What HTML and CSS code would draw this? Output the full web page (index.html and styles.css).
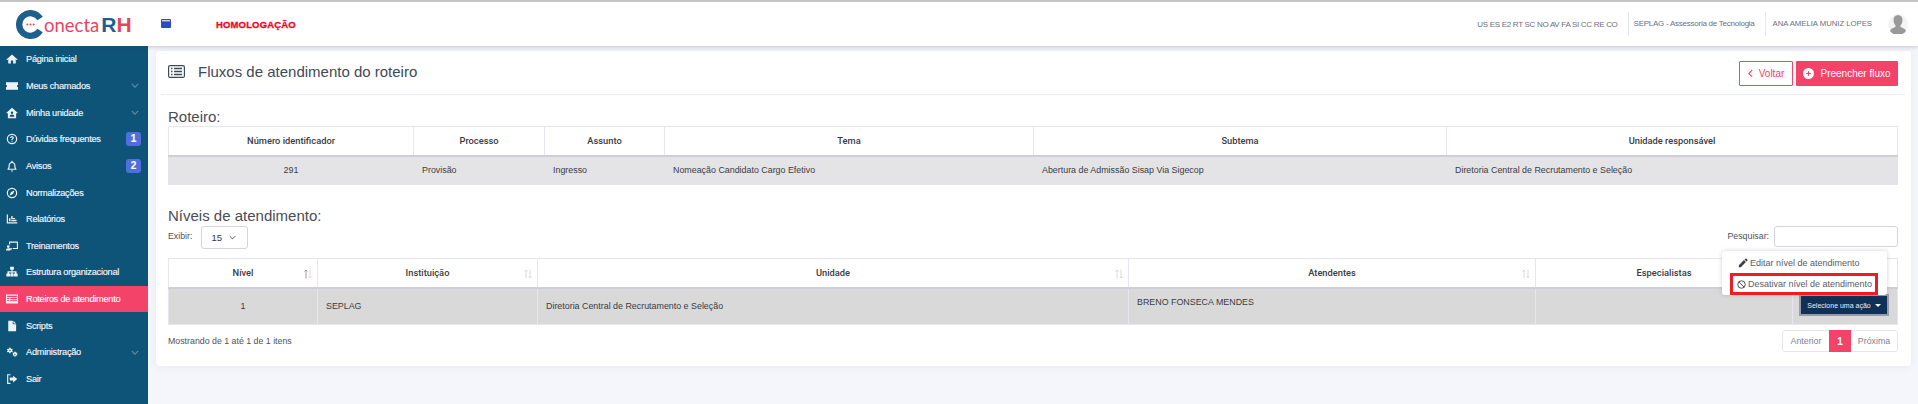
FILE: index.html
```html
<!DOCTYPE html>
<html lang="pt-BR">

<head>
	<meta charset="UTF-8">
	<title>Fluxos de atendimento do roteiro</title>
	<link rel="stylesheet" href="styles.css">
</head>

<body>
	<header class="top-bar">
		<div class="logo">
			<svg class="logo-mark" viewBox="0 0 32 32" xmlns="http://www.w3.org/2000/svg">
				<path d="M26.600 9.400A12.500 12.500 0 1 0 26.600 22.600" fill="none" stroke="#1f5f8e" stroke-width="7" />
				<circle cx="12.500" cy="16" r="1.100" fill="#e8465f" />
				<circle cx="16" cy="16" r="1.100" fill="#e8465f" />
				<circle cx="19.500" cy="16" r="1.100" fill="#e8465f" />
			</svg>
			<span class="logo-text">onecta</span>
			<span class="logo-rh"><b>R</b><i>H</i></span>
		</div>
		<svg class="window-icon" viewBox="0 0 10 9" xmlns="http://www.w3.org/2000/svg">
			<rect width="10" height="9" rx="1" fill="#2b4cc0" />
			<rect x="1" y="1" width="8" height="1.400" fill="#c9d2f2" />
		</svg>
		<span class="env">HOMOLOGAÇÃO</span>
		<div class="top-right">
			<span class="modules">US ES E2 RT SC NO AV FA SI CC RE CO</span>
			<span class="unit">SEPLAG - Assessoria de Tecnologia</span>
			<span class="user">ANA AMELIA MUNIZ LOPES</span>
			<svg class="avatar" viewBox="0 0 20 20" xmlns="http://www.w3.org/2000/svg">
				<circle cx="10" cy="10" r="10" fill="#f4f4f4" />
				<path d="M10 1c3 0 4.500 2.200 4.500 5 0 2.500-1 4.500-2 5.500v1.500c2 1 5 1.500 5.500 4A10 10 0 0 1 2 17c.5-2.500 3.500-3 5.500-4v-1.500c-1-1-2-3-2-5.500 0-2.800 1.500-5 4.500-5z" fill="#999" />
			</svg>
		</div>
	</header>

	<div class="main">
		<nav class="sidebar">
			<a class="nav-item">
				<svg class="nav-icon" viewBox="0 0 16 16"><path d="M8 2 0.500 8.500 1.500 9.500 3 8.300V14h3.500v-4h3v4H13V8.300l1.500 1.200 1-1z" /></svg>
				Página inicial
			</a>
			<a class="nav-item">
				<svg class="nav-icon" viewBox="0 0 16 16"><path d="M0 3h16v3.500a1.500 1.500 0 0 0 0 3V13H0V9.500a1.500 1.500 0 0 0 0-3z" /></svg>
				Meus chamados
				<svg class="chevron" viewBox="0 0 10 6"><path d="M1 1l4 4 4-4" /></svg>
			</a>
			<a class="nav-item">
				<svg class="nav-icon" viewBox="0 0 16 16"><path d="M8 1 0.500 7.500 1.500 8.500 2.500 7.700V15h11V7.700l1 .8 1-1zM8 6a1.600 1.600 0 1 1 0 3.200A1.600 1.600 0 0 1 8 6zm-3 7c0-2 1-3 3-3s3 1 3 3z" fill-rule="evenodd" /></svg>
				Minha unidade
				<svg class="chevron" viewBox="0 0 10 6"><path d="M1 1l4 4 4-4" /></svg>
			</a>
			<a class="nav-item">
				<svg class="nav-icon" viewBox="0 0 16 16"><path d="M8 1a7 7 0 1 0 0 14A7 7 0 0 0 8 1zm0 1.600a5.400 5.400 0 1 1 0 10.800A5.400 5.400 0 0 1 8 2.600zM8 4.300C6.500 4.300 5.500 5.200 5.400 6.500h1.500c.1-.5.500-.9 1.100-.9s1 .3 1 .8c0 1-2 1.100-2 3h1.500c0-1.300 2-1.400 2-3.100 0-1.200-1-2-2.500-2zM7.200 10.300h1.600v1.500H7.200z" fill-rule="evenodd" /></svg>
				Dúvidas frequentes
				<span class="badge">1</span>
			</a>
			<a class="nav-item">
				<svg class="nav-icon" viewBox="0 0 16 16"><path d="M8 1a1 1 0 0 0-1 1v.6C4.800 3 3.500 4.800 3.500 7c0 3-1 4-1.500 5v1h12v-1c-.5-1-1.500-2-1.500-5 0-2.200-1.300-4-3.500-4.400V2a1 1 0 0 0-1-1zm0 3c2 0 3 1.400 3 3.200 0 2 .4 3.300.9 4.300H4.100c.5-1 .9-2.300.9-4.300C5 5.400 6 4 8 4zM6.500 14a1.500 1.500 0 0 0 3 0z" fill-rule="evenodd" /></svg>
				Avisos
				<span class="badge">2</span>
			</a>
			<a class="nav-item">
				<svg class="nav-icon" viewBox="0 0 16 16"><path d="M8 1a7 7 0 1 0 0 14A7 7 0 0 0 8 1zm0 1.600a5.400 5.400 0 1 1 0 10.800A5.400 5.400 0 0 1 8 2.600zM11.500 4.500 6.700 6.700 4.500 11.500 9.300 9.300z" fill-rule="evenodd" /></svg>
				Normalizações
			</a>
			<a class="nav-item">
				<svg class="nav-icon" viewBox="0 0 16 16"><path d="M1 2h1.600v10.400H15V14H1zM4 7h2v4H4zM7 4h1.800v2.600H12V8H7zM7 9h7v2H7z" /></svg>
				Relatórios
			</a>
			<a class="nav-item">
				<svg class="nav-icon" viewBox="0 0 16 16"><path d="M4 2h12v10H9v-1.500h5.500v-7H5.500V6H4zM3 7a1.800 1.800 0 1 1 0 3.600A1.800 1.800 0 0 1 3 7zM0 14c0-2 1-3 3-3h5v1.500H6V14z" /></svg>
				Treinamentos
			</a>
			<a class="nav-item">
				<svg class="nav-icon" viewBox="0 0 16 16"><path d="M5.500 1h5v4H8.700v2H14v3h1.500v4h-5v-4H12V8.500H8.700V10h1.300v4H6v-4h1.300V8.500H4V10h1.500v4h-5v-4H2V7h5.300V5H5.500z" /></svg>
				Estrutura organizacional
			</a>
			<a class="nav-item active">
				<svg class="nav-icon" viewBox="0 0 16 16"><path d="M0 2h16v12H0zm1.500 1.500v2h13v-2zm0 3.200v1.600h3V6.700zm4.200 0v1.600h8.800V6.700zm-4.200 2.800v1.600h3V9.500zm4.200 0v1.600h8.800V9.500z" fill-rule="evenodd" /></svg>
				Roteiros de atendimento
			</a>
			<a class="nav-item">
				<svg class="nav-icon" viewBox="0 0 16 16"><path d="M3 1h6v4.500h4.500V15H3zM10 1l3.500 3.500H10z" /></svg>
				Scripts
			</a>
			<a class="nav-item">
				<svg class="nav-icon" viewBox="0 0 16 16"><path d="M5 2l1 .2.300 1.200.9.500 1.200-.4.700 1-.8.900v1l.8.900-.7 1-1.200-.4-.9.500L6 9.600H4.400l-.3-1.200-.9-.5-1.200.4-.7-1 .8-.9v-1l-.8-.9.700-1 1.200.4.900-.5.300-1.200zm.2 3a1 1 0 1 0 0 2 1 1 0 0 0 0-2zM12 7.500l.9.200.2 1 .7.400 1-.3.500.8-.7.800v.8l.7.800-.5.800-1-.3-.7.400-.2 1h-1.800l-.2-1-.7-.4-1 .3-.5-.8.700-.8v-.8l-.7-.8.500-.8 1 .3.700-.4.200-1zm-.1 2.700a.9.900 0 1 0 0 1.800.9.900 0 0 0 0-1.800z" fill-rule="evenodd" /></svg>
				Administração
				<svg class="chevron" viewBox="0 0 10 6"><path d="M1 1l4 4 4-4" /></svg>
			</a>
			<a class="nav-item">
				<svg class="nav-icon" viewBox="0 0 16 16"><path d="M6 3H3v10h3v1.500H1.500v-13H6zM9.500 3.500 15 8l-5.500 4.500V10H5V6h4.500z" /></svg>
				Sair
			</a>
		</nav>

		<main class="content">
			<section class="card">
				<div class="card-head">
					<svg class="title-icon" viewBox="0 0 17 13" xmlns="http://www.w3.org/2000/svg">
						<rect x=".6" y=".6" width="15.800" height="11.800" rx="1.500" fill="none" stroke="#3c4a5c" stroke-width="1.200" />
						<path d="M3 3.500h1.500M6 3.500h8M3 6.500h1.500M6 6.500h8M3 9.500h1.500M6 9.500h8" stroke="#3c4a5c" stroke-width="1.300" />
					</svg>
					<h1 class="card-title">Fluxos de atendimento do roteiro</h1>
					<div class="head-actions">
						<button class="btn btn-outline">
							<svg class="btn-chevron" viewBox="0 0 6 10"><path d="M5 1 1 5l4 4" /></svg>
							Voltar
						</button>
						<button class="btn btn-fill">
							<svg class="btn-plus" viewBox="0 0 12 12"><circle cx="6" cy="6" r="6" fill="#fff" /><path d="M6 3.500v5M3.500 6h5" stroke="#f44369" stroke-width="1.200" /></svg>
							Preencher fluxo
						</button>
					</div>
				</div>

				<div class="card-body">
					<h2 class="section-title">Roteiro:</h2>
					<table class="grid grid-route">
						<thead>
							<tr>
								<th class="r-id">Número identificador</th>
								<th class="r-proc">Processo</th>
								<th class="r-subj">Assunto</th>
								<th class="r-theme">Tema</th>
								<th class="r-sub">Subtema</th>
								<th>Unidade responsável</th>
							</tr>
						</thead>
						<tbody>
							<tr>
								<td class="center">291</td>
								<td>Provisão</td>
								<td>Ingresso</td>
								<td>Nomeação Candidato Cargo Efetivo</td>
								<td>Abertura de Admissão Sisap Via Sigecop</td>
								<td>Diretoria Central de Recrutamento e Seleção</td>
							</tr>
						</tbody>
					</table>

					<h2 class="section-title section-levels">Níveis de atendimento:</h2>
					<div class="table-tools">
						<label class="tool-label">Exibir:</label>
						<div class="select-box">
							15
							<svg class="select-chevron" viewBox="0 0 10 6"><path d="M1 1l4 4 4-4" /></svg>
						</div>
						<label class="tool-label search-label">Pesquisar:</label>
						<div class="search-box"></div>
					</div>

					<div class="levels-wrap">
						<table class="grid grid-levels">
							<thead>
								<tr>
									<th class="l-level">Nível
										<svg class="sort" viewBox="0 0 8 10"><path class="sort-up" d="M2 9.500V1M.5 2.500 2 1l1.500 1.500" /><path d="M6 .5V9M4.500 7.500 6 9l1.500-1.500" /></svg>
									</th>
									<th class="l-inst">Instituição
										<svg class="sort" viewBox="0 0 8 10"><path d="M2 9.500V1M.5 2.500 2 1l1.500 1.500M6 .5V9M4.500 7.500 6 9l1.500-1.500" /></svg>
									</th>
									<th class="l-unit">Unidade
										<svg class="sort" viewBox="0 0 8 10"><path d="M2 9.500V1M.5 2.500 2 1l1.500 1.500M6 .5V9M4.500 7.500 6 9l1.500-1.500" /></svg>
									</th>
									<th class="l-att">Atendentes
										<svg class="sort" viewBox="0 0 8 10"><path d="M2 9.500V1M.5 2.500 2 1l1.500 1.500M6 .5V9M4.500 7.500 6 9l1.500-1.500" /></svg>
									</th>
									<th class="l-spec">Especialistas</th>
									<th></th>
								</tr>
							</thead>
							<tbody>
								<tr>
									<td class="center">1</td>
									<td>SEPLAG</td>
									<td>Diretoria Central de Recrutamento e Seleção</td>
									<td class="cell-top">BRENO FONSECA MENDES</td>
									<td></td>
									<td class="cell-action">
										<button class="action-btn">Selecione uma ação<span class="caret"></span></button>
									</td>
								</tr>
							</tbody>
						</table>

						<div class="action-menu">
							<a class="menu-item">
								<svg class="menu-icon" viewBox="0 0 12 12"><path d="M8.800.8a1 1 0 0 1 1.400 0l1 1a1 1 0 0 1 0 1.400l-1 1-2.400-2.400zM7.100 2.500 9.500 4.900 3.400 11H1v-2.400z" fill="#3f4047" /></svg>
								Editar nível de atendimento
							</a>
							<a class="menu-item menu-marked">
								<svg class="menu-icon" viewBox="0 0 12 12"><circle cx="6" cy="6" r="5" fill="none" stroke="#3f4047" stroke-width="1.200" /><path d="M2.500 2.500l7 7" stroke="#3f4047" stroke-width="1.200" /></svg>
								Desativar nível de atendimento
							</a>
						</div>
					</div>

					<div class="table-foot">
						<span class="tool-label">Mostrando de 1 até 1 de 1 itens</span>
						<div class="pager">
							<a class="page-link">Anterior</a>
							<a class="page-link page-current">1</a>
							<a class="page-link">Próxima</a>
						</div>
					</div>
				</div>
			</section>
		</main>
	</div>
</body>

</html>
```

FILE: styles.css
```css
:root {
	--navy: #0e5479;
	--pink: #f44369;
	--line: #e6e6f2;
	--text: #3a3b42;
	--muted: #6f727d;
}

* {
	box-sizing: border-box;
}

html,
body {
	height: 100%;
}

body {
	margin: 0;
	font-family: "Liberation Sans", Arial, sans-serif;
	font-size: 10px;
	color: var(--text);
	background-color: #f5f6fb;
	display: flex;
	flex-direction: column;
	overflow: hidden;
}

.top-bar {
	height: 46px;
	flex: none;
	display: flex;
	align-items: center;
	background-color: #fff;
	border-top: 2px solid #c4c4c4;
	box-shadow: 0 1px 4px rgba(60, 60, 80, 0.25);
	position: relative;
	z-index: 2;
	padding-left: 16px;
}

.logo {
	display: flex;
	align-items: center;
	width: 145px;
	margin-top: 1px;
}

.logo-mark {
	width: 29px;
	height: 29px;
	flex: none;
}

.logo-text {
	font-family: Lato, sans-serif;
	font-size: 18.500px;
	color: #e8465f;
	margin-left: -1px;
}

.logo-rh {
	font-size: 21px;
	font-weight: 700;
	margin-left: 2px;
}

.logo-rh b {
	color: #1f5f8e;
}

.logo-rh i {
	color: #e8465f;
	font-style: normal;
}

.window-icon {
	width: 10px;
	height: 9px;
	margin-bottom: 1px;
}

.env {
	margin-left: 45px;
	font-size: 9.500px;
	font-weight: 700;
	color: #f5061e;
	letter-spacing: 0.15px;
	-webkit-text-stroke: 0.3px #f5061e;
}

.top-right {
	margin-left: auto;
	display: flex;
	align-items: center;
	height: 24px;
	padding-right: 10px;
	color: #6c6f80;
	font-size: 8px;
}

.modules {
	padding-right: 10px;
	letter-spacing: -0.3px;
}

.unit {
	border-left: 1px solid var(--line);
	padding: 0 10px 0 5px;
	line-height: 24px;
	letter-spacing: -0.25px;
}

.user {
	border-left: 1px solid var(--line);
	padding-left: 7px;
	line-height: 24px;
	font-size: 7.800px;
	letter-spacing: -0.05px;
}

.avatar {
	width: 20px;
	height: 20px;
	margin-left: 16px;
}

.main {
	flex: 1;
	display: flex;
	min-height: 0;
}

.sidebar {
	width: 148px;
	flex: none;
	background-color: var(--navy);
	overflow: hidden;
}

.nav-item {
	height: 26.650px;
	display: flex;
	align-items: center;
	padding: 0 7px 0 6px;
	color: #f2f6f9;
	font-size: 9.200px;
	letter-spacing: -0.25px;
	-webkit-text-stroke: 0.15px #f2f6f9;
}

.nav-item.active {
	background-color: var(--pink);
	color: #fff;
}

.nav-icon {
	width: 12px;
	height: 12px;
	margin-right: 8px;
	fill: #eef3f7;
	flex: none;
}

.chevron {
	width: 8px;
	height: 5px;
	margin: 0 2px 0 auto;
	fill: none;
	stroke: #5f8ba5;
	stroke-width: 1.400;
}

.badge {
	margin-left: auto;
	width: 15px;
	height: 14px;
	background-color: #4f6fe0;
	border-radius: 3px;
	color: #fff;
	font-size: 10px;
	font-weight: 700;
	text-align: center;
	line-height: 14px;
}

.content {
	flex: 1;
	min-width: 0;
	padding: 5px 7px 0 8px;
}

.card {
	background-color: #fff;
	border-radius: 4px;
	height: 315px;
	box-shadow: 0 1px 8px rgba(90, 90, 140, 0.07);
}

.card-head {
	height: 44px;
	margin: 0 6px 0 5px;
	padding: 0 7px;
	display: flex;
	align-items: center;
	border-bottom: 1px solid #ebebf2;
}

.title-icon {
	width: 17px;
	height: 13px;
	margin-top: -2px;
}

.card-title {
	margin: -2px 0 0 13px;
	font-size: 15px;
	font-weight: 400;
	color: #3f4a56;
}

.head-actions {
	margin-left: auto;
	display: flex;
	gap: 3px;
	margin-top: 2px;
}

.btn {
	height: 25px;
	font-family: inherit;
	font-size: 10px;
	border-radius: 1px;
	display: flex;
	align-items: center;
	padding: 0;
	justify-content: center;
}

.btn-outline {
	width: 54px;
	background-color: #fff;
	border: 1px solid var(--pink);
	color: var(--pink);
	gap: 6px;
}

.btn-fill {
	width: 102px;
	background-color: var(--pink);
	border: 0;
	color: #fff;
	gap: 6px;
}

.btn-chevron {
	width: 5px;
	height: 9px;
	fill: none;
	stroke: var(--pink);
	stroke-width: 1.300;
}

.btn-plus {
	width: 11px;
	height: 11px;
}

.card-body {
	padding: 0 13px 0 12px;
}

.section-title {
	margin: 0;
	font-size: 15px;
	font-weight: 400;
	color: #4a4c55;
	line-height: 19px;
	padding-top: 12px;
}

.section-levels {
	padding-top: 21px;
	height: 41px;
	line-height: 20px;
}

.grid {
	width: 100%;
	border-collapse: collapse;
	table-layout: fixed;
	font-size: 8.900px;
	border: 1px solid var(--line);
}

.grid th {
	font-family: Roboto, sans-serif;
	font-weight: 500;
	height: 29px;
	text-align: center;
	background-color: #fff;
	color: #3a3b42;
	border: 1px solid var(--line);
	border-bottom: 2px solid #cfcfd8;
	position: relative;
	padding: 0;
	font-size: 9.300px;
}

.grid td {
	padding: 0 8px;
	border: 1px solid var(--line);
}

.grid-route td {
	height: 29px;
	background-color: #e4e4e6;
	border-color: #e4e4e6;
}

.grid-levels td {
	height: 37px;
	background-color: #d9d9da;
}

.grid td.center {
	text-align: center;
}

.grid td.cell-top {
	vertical-align: top;
	padding-top: 8px;
}

.r-id {
	width: 245px;
}

.r-proc {
	width: 131px;
}

.r-subj {
	width: 120px;
}

.r-theme {
	width: 369px;
}

.r-sub {
	width: 413px;
}

.l-level {
	width: 149px;
}

.l-inst {
	width: 220px;
}

.l-unit {
	width: 591px;
}

.l-att {
	width: 407px;
}

.l-spec {
	width: 257px;
}

.sort {
	position: absolute;
	right: 5px;
	top: 10px;
	width: 8px;
	height: 10px;
	fill: none;
	stroke: #d2d2da;
	stroke-width: 0.800;
}

.sort .sort-up {
	stroke: #a08088;
}

.table-tools {
	display: flex;
	align-items: flex-start;
	height: 32px;
}

.tool-label {
	font-size: 8.800px;
	color: #50525c;
}

.table-tools .tool-label {
	line-height: 21px;
}

.select-box {
	width: 47px;
	height: 23px;
	margin-left: 9px;
	border: 1px solid #d4d4de;
	border-radius: 3px;
	display: flex;
	align-items: center;
	padding: 0 8px 0 9px;
	font-size: 9.500px;
}

.select-chevron {
	width: 7px;
	height: 5px;
	margin-left: auto;
	margin-right: 3px;
	fill: none;
	stroke: #555;
	stroke-width: 1.300;
}

.search-label {
	margin-left: auto;
}

.search-box {
	width: 124px;
	height: 21px;
	margin-left: 5px;
	border: 1px solid #d4d4de;
	border-radius: 3px;
}

.levels-wrap {
	position: relative;
}

.cell-action {
	text-align: center;
}

.grid td.cell-action {
	padding: 0 0 0 3px;
}

.action-btn {
	width: 86px;
	height: 18px;
	background-color: #0f3057;
	border: 0;
	outline: 2px solid #9a9aa6;
	color: #e8eefc;
	font-family: inherit;
	font-size: 7px;
	padding: 0;
	margin: -2px 0 0 5px;
	display: block;
}

.caret {
	display: inline-block;
	margin-left: 4px;
	border-left: 3px solid transparent;
	border-right: 3px solid transparent;
	border-top: 3px solid #fff;
	vertical-align: 1px;
}

.action-menu {
	position: absolute;
	right: 11px;
	top: -7px;
	width: 165px;
	height: 44px;
	background-color: #fff;
	border-radius: 3px;
	box-shadow: 0 0 4px rgba(80, 80, 120, 0.25);
	padding-top: 1px;
}

.menu-item {
	display: flex;
	align-items: center;
	height: 21px;
	padding-left: 16px;
	font-size: 9px;
	white-space: nowrap;
	color: #5a5c66;
}

.menu-icon {
	width: 10px;
	height: 10px;
	margin-right: 2px;
}

.menu-marked {
	margin: 0 9px 0 8px;
	height: 22px;
	padding-left: 4px;
	border: 3px solid #ef1c25;
}

.menu-marked .menu-icon {
	width: 9px;
	height: 9px;
	margin-right: 2px;
}

.table-foot {
	display: flex;
	align-items: flex-start;
	justify-content: space-between;
	padding-top: 5px;
}

.table-foot .tool-label {
	line-height: 22px;
}

.pager {
	display: flex;
	height: 22px;
	border: 1px solid var(--line);
	border-radius: 3px;
	font-size: 8.800px;
	color: #7f8192;
}

.page-link {
	display: flex;
	align-items: center;
	justify-content: center;
	width: 46px;
}

.page-current {
	width: 22px;
	margin: -1px 0;
	background-color: var(--pink);
	color: #fff;
	font-size: 10px;
	font-weight: 700;
}
```
